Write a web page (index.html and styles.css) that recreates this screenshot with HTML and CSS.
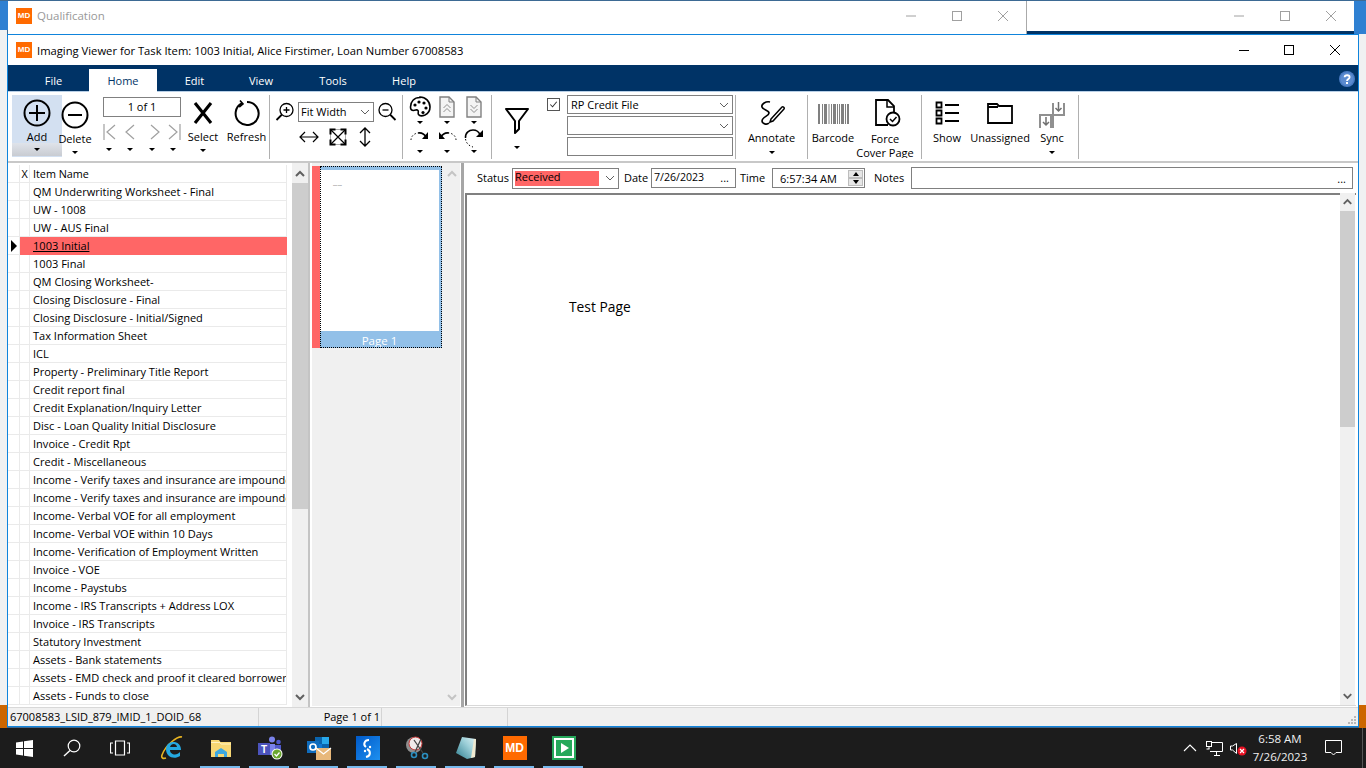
FILE: index.html
```html
<!DOCTYPE html>
<html lang="en">
<head>
<meta charset="utf-8">
<title>Imaging Viewer</title>
<link rel="stylesheet" href="styles.css">
</head>
<body>
<div class="screen">
  <div class="desktop">
    <div class="back-strip left-blue"></div>
    <div class="back-strip left-light"></div>
    <div class="back-strip left-orange"></div>
    <div class="back-strip right-blue"></div>
    <div class="back-strip right-light"></div>
    <div class="back-strip right-orange"></div>

    <div class="back-win win-qual">
      <span class="md-logo">MD</span><span class="back-title">Qualification</span>
      <div class="controls dim">
        <svg class="ctl" width="46" height="12" viewBox="0 0 46 12"><path d="M18 6h10"/></svg>
        <svg class="ctl" width="46" height="12" viewBox="0 0 46 12"><rect x="18.5" y="1.5" width="9" height="9"/></svg>
        <svg class="ctl" width="46" height="12" viewBox="0 0 46 12"><path d="M18 1l10 10M28 1L18 11"/></svg>
      </div>
    </div>
    <div class="back-win win-other">
      <div class="controls dim">
        <svg class="ctl" width="46" height="12" viewBox="0 0 46 12"><path d="M18 6h10"/></svg>
        <svg class="ctl" width="46" height="12" viewBox="0 0 46 12"><rect x="18.5" y="1.5" width="9" height="9"/></svg>
        <svg class="ctl" width="46" height="12" viewBox="0 0 46 12"><path d="M18 1l10 10M28 1L18 11"/></svg>
      </div>
    </div>

    <div class="main-win">
      <div class="titlebar">
        <span class="md-logo">MD</span>
        <span class="main-title">Imaging Viewer for Task Item: 1003 Initial, Alice Firstimer, Loan Number 67008583</span>
        <div class="controls">
          <svg class="ctl dark" width="46" height="12" viewBox="0 0 46 12"><path d="M19 6.5h10"/></svg>
          <svg class="ctl dark" width="46" height="12" viewBox="0 0 46 12"><rect x="18.5" y="1.5" width="9" height="9"/></svg>
          <svg class="ctl dark" width="46" height="12" viewBox="0 0 46 12"><path d="M18 1l10 10M28 1L18 11"/></svg>
        </div>
      </div>

      <div class="menubar">
        <span class="tab">File</span>
        <span class="tab active">Home</span>
        <span class="tab">Edit</span>
        <span class="tab">View</span>
        <span class="tab">Tools</span>
        <span class="tab">Help</span>
        <svg class="help" width="16" height="16" viewBox="0 0 16 16"><circle cx="8" cy="8" r="8" fill="#4a7cc4"/><circle cx="8" cy="8" r="6.5" fill="#5b8bd0"/><path d="M5.6 6.2C5.8 3.6 10.6 3.6 10.6 6.2 10.6 8 8 8 8 10" fill="none" stroke="#fff" stroke-width="1.8"/><rect x="7" y="11" width="2" height="2" fill="#fff"/></svg>
      </div>

      <div class="ribbon">
        <div class="group g-main">
          <div class="tool add">
            <svg width="28" height="28" viewBox="0 0 28 28"><circle cx="14" cy="14" r="12.5" fill="none" stroke="#000" stroke-width="2"/><path d="M14 6v16M6 14h16" stroke="#000" stroke-width="2"/></svg>
            <span class="label">Add</span>
            <span class="drop"><i class="caret"></i></span>
          </div>
          <div class="tool del low">
            <svg width="28" height="28" viewBox="0 0 28 28"><circle cx="14" cy="14" r="12.5" fill="none" stroke="#000" stroke-width="2"/><path d="M7 14h14" stroke="#000" stroke-width="2"/></svg>
            <span class="label">Delete</span>
            <span class="drop"><i class="caret"></i></span>
          </div>
          <div class="pager">
            <div class="page-box">1 of 1</div>
            <div class="nav-row">
              <svg width="14" height="16" viewBox="0 0 14 16"><path d="M1 0v16M12 1L4 8l8 7" fill="none" stroke="#a0a0a0" stroke-width="1.2"/></svg>
              <svg width="10" height="16" viewBox="0 0 10 16"><path d="M9 1L1 8l8 7" fill="none" stroke="#a0a0a0" stroke-width="1.2"/></svg>
              <svg width="10" height="16" viewBox="0 0 10 16"><path d="M1 1l8 7-8 7" fill="none" stroke="#a0a0a0" stroke-width="1.2"/></svg>
              <svg width="14" height="16" viewBox="0 0 14 16"><path d="M13 0v16M2 1l8 7-8 7" fill="none" stroke="#a0a0a0" stroke-width="1.2"/></svg>
            </div>
            <div class="nav-carets"><i class="caret"></i><i class="caret"></i><i class="caret"></i><i class="caret"></i></div>
          </div>
          <div class="tool sel">
            <svg width="28" height="28" viewBox="0 0 28 28"><path d="M6 4l16 20M22 4L6 24" stroke="#000" stroke-width="3.1"/></svg>
            <span class="label">Select</span>
            <span class="drop"><i class="caret"></i></span>
          </div>
          <div class="tool ref">
            <svg width="28" height="28" viewBox="0 0 28 28"><path d="M9 4.2A11.5 11.5 0 1 0 14 3" fill="none" stroke="#000" stroke-width="2"/><path d="M7 1.5L10 5 6.2 8" fill="none" stroke="#000" stroke-width="1.6"/></svg>
            <span class="label">Refresh</span>
          </div>
        </div>

        <div class="group g-zoom">
          <div class="zoom-row">
            <svg width="20" height="20" viewBox="0 0 20 20"><circle cx="11.500" cy="8" r="6.500" fill="none" stroke="#000" stroke-width="1.300"/><path d="M8.500 8h6M11.500 5v6" stroke="#000" stroke-width="1.300"/><path d="M7 12.500L1.500 18" stroke="#000" stroke-width="1.800"/></svg>
            <div class="combo zoom-combo"><span>Fit Width</span><svg class="chev" width="10" height="6" viewBox="0 0 10 6"><path d="M1 1l4 4 4-4" fill="none" stroke="#606060"/></svg></div>
            <svg width="20" height="20" viewBox="0 0 20 20"><circle cx="8.500" cy="8" r="6.500" fill="none" stroke="#000" stroke-width="1.300"/><path d="M5.500 8h6" stroke="#000" stroke-width="1.300"/><path d="M13 12.500L18.500 18" stroke="#000" stroke-width="1.800"/></svg>
          </div>
          <div class="fit-row">
            <svg width="22" height="20" viewBox="0 0 22 20"><path d="M2 10h18M7 5l-5 5 5 5M15 5l5 5-5 5" fill="none" stroke="#000" stroke-width="1.200"/></svg>
            <svg width="22" height="20" viewBox="0 0 22 20"><path d="M4 3l14 14M18 3L4 17" stroke="#000" stroke-width="1.200"/><path d="M8 2.500h6M8 17.500h6M3.500 7v6M18.500 7v6" stroke="#aaa" stroke-width="1"/><path d="M2.500 1.500h6v2h-4v4h-2zM19.500 1.500h-6v2h4v4h2zM2.500 18.500h6v-2h-4v-4h-2zM19.500 18.500h-6v-2h4v-4h2z"/></svg>
            <svg width="14" height="20" viewBox="0 0 14 20"><path d="M7 1v18M2 6l5-5 5 5M2 14l5 5 5-5" fill="none" stroke="#000" stroke-width="1.300"/></svg>
          </div>
        </div>

        <div class="group g-doc">
          <div class="cell">
            <svg width="22" height="22" viewBox="0 0 22 22"><path d="M11 1.500C5 1.500 1.500 5.500 1.500 11c0 2 1 3.500 3 3.500 2.500 0 3-1.500 4.500 0 1 1-.5 2.500.5 4 1 1.500 4 1.500 6.500.5 3.500-1.500 5-4.500 5-8 0-5.500-4.500-10-10-10z" fill="#fff" stroke="#000" stroke-width="1.600"/><circle cx="6" cy="9" r="1.600"/><circle cx="10" cy="6" r="1.600"/><circle cx="15" cy="7" r="1.600"/><circle cx="17" cy="12" r="1.600"/><circle cx="14" cy="16.500" r="1.600"/></svg>
            <i class="caret"></i>
          </div>
          <div class="cell">
            <svg width="16" height="22" viewBox="0 0 16 22"><path d="M1 1h9l5 5v15H1z" fill="#f4f4f4" stroke="#808080" stroke-width="1.400"/><path d="M10 1v5h5" fill="none" stroke="#808080"/><path d="M4.500 12L8 8.500l3.500 3.500M4.500 16L8 12.500l3.500 3.500" fill="none" stroke="#909090"/></svg>
            <i class="caret"></i>
          </div>
          <div class="cell">
            <svg width="16" height="22" viewBox="0 0 16 22"><path d="M1 1h9l5 5v15H1z" fill="#f4f4f4" stroke="#808080" stroke-width="1.400"/><path d="M10 1v5h5" fill="none" stroke="#808080"/><path d="M4.500 9L8 12.500 11.500 9M4.500 13L8 16.500 11.500 13" fill="none" stroke="#909090"/></svg>
            <i class="caret"></i>
          </div>
          <div class="cell">
            <svg width="20" height="20" viewBox="0 0 20 20"><path d="M1 12A8 7 0 0 1 8 5" fill="none" stroke="#000" stroke-dasharray="1.500 2"/><path d="M8 5C11 4.500 14 5.500 16 9" fill="none" stroke="#000" stroke-width="1.600"/><path d="M18 4v7h-6z"/></svg>
            <i class="caret"></i>
          </div>
          <div class="cell">
            <svg width="20" height="20" viewBox="0 0 20 20"><path d="M19 12A8 7 0 0 0 12 5" fill="none" stroke="#000" stroke-dasharray="1.500 2"/><path d="M12 5C9 4.500 6 5.500 4 9" fill="none" stroke="#000" stroke-width="1.600"/><path d="M2 4v7h6z"/></svg>
            <i class="caret"></i>
          </div>
          <div class="cell">
            <svg width="22" height="22" viewBox="0 0 22 22"><path d="M2.500 11C2 6 6 3 10 3c3 0 6 2 7 5" fill="none" stroke="#000" stroke-width="1.500"/><path d="M2.500 12C3 16 6 19 10 20" fill="none" stroke="#000" stroke-dasharray="1.500 2"/><path d="M20 3v7h-7z"/></svg>
            <i class="caret"></i>
          </div>
        </div>

        <div class="group g-filter">
          <div class="tool funnel">
            <svg width="26" height="28" viewBox="0 0 26 28"><path d="M2 2h22L15 14v8l-4 4V14z" fill="#fff" stroke="#000" stroke-width="2" stroke-linejoin="round"/></svg>
            <span class="drop"><i class="caret"></i></span>
          </div>
          <div class="check"><svg width="11" height="11" viewBox="0 0 12 12"><path d="M2.500 6l2.500 2.500 4.500-5.500" fill="none" stroke="#333" stroke-width="1.100"/></svg></div>
          <div class="filters">
            <div class="combo"><span>RP Credit File</span><svg class="chev" width="10" height="6" viewBox="0 0 10 6"><path d="M1 1l4 4 4-4" fill="none" stroke="#606060"/></svg></div>
            <div class="combo"><span></span><svg class="chev" width="10" height="6" viewBox="0 0 10 6"><path d="M1 1l4 4 4-4" fill="none" stroke="#606060"/></svg></div>
            <div class="combo"></div>
          </div>
        </div>

        <div class="group g-annot">
          <div class="tool wide">
            <svg width="28" height="28" viewBox="0 0 28 28"><path d="M12 3C8 2 3 5 4 8c1 3 7 3 7 6 0 3-7 4-7 8 0 3 5 4 7 2" fill="none" stroke="#000" stroke-width="1.700"/><path d="M13 20L24 8c1-1 3 1 2 2L15 22l-3 1z" fill="#fff" stroke="#000" stroke-width="1.500"/></svg>
            <span class="label">Annotate</span>
            <span class="drop"><i class="caret"></i></span>
          </div>
        </div>

        <div class="group g-code">
          <div class="tool barcode">
            <svg width="32" height="20" viewBox="0 0 32 20"><path d="M1 0h2v20H1zM5 0h1v20H5zM7 0h3v20H7zM11.500 0h1v20h-1zM14 0h1v20h-1zM16 0h3v20h-3zM20 0h1v20h-1zM22 0h1v20h-1zM24 0h3v20h-3zM28 0h1v20h-1zM30 0h2v20h-2z" fill="#808080"/></svg>
            <span class="label">Barcode</span>
          </div>
          <div class="tool force">
            <svg width="28" height="28" viewBox="0 0 28 28"><path d="M15 26H3V1h12l6 6v8" fill="#fff" stroke="#000" stroke-width="1.800"/><path d="M14 1v7h7" fill="none" stroke="#000" stroke-width="1.500"/><circle cx="20" cy="20" r="6.500" fill="#fff" stroke="#000" stroke-width="1.800"/><path d="M17 20l2.500 2.500 4-4.500" fill="none" stroke="#000" stroke-width="1.500"/></svg>
            <span class="label two">Force<br>Cover Page</span>
          </div>
        </div>

        <div class="group g-show">
          <div class="tool show">
            <svg width="24" height="24" viewBox="0 0 24 24"><path d="M1.500 1.500h5v5h-5zM1.500 9.500h5v5h-5zM1.500 17.500h5v5h-5z" fill="none" stroke="#000" stroke-width="1.800"/><path d="M10 4h14M10 12h14M10 20h14" stroke="#000" stroke-width="1.800"/></svg>
            <span class="label">Show</span>
          </div>
          <div class="tool unas">
            <svg width="26" height="24" viewBox="0 0 26 24"><path d="M1 3h9l2 2h13v17H1zM1 6h10" fill="none" stroke="#000" stroke-width="1.800"/></svg>
            <span class="label">Unassigned</span>
          </div>
          <div class="tool sync">
            <svg width="26" height="26" viewBox="0 0 26 26"><path d="M14 1v12h11V1M1 26V13h13v13M12 26v-13" fill="none" stroke="#909090" stroke-width="2"/><path d="M19.500 0v9M16.500 6l3 3 3-3M7 15v8M4 20l3 3 3-3" fill="none" stroke="#707070" stroke-width="1.500"/></svg>
            <span class="label">Sync</span>
            <span class="drop"><i class="caret"></i></span>
          </div>
        </div>
      </div>

      <div class="content">
        <div class="grid">
          <div class="row head"><span class="rh"></span><span class="cx">X</span><span class="name">Item Name</span></div>
          <div class="row"><span class="rh"></span><span class="cx"></span><span class="name">QM Underwriting Worksheet - Final</span></div>
          <div class="row"><span class="rh"></span><span class="cx"></span><span class="name">UW - 1008</span></div>
          <div class="row"><span class="rh"></span><span class="cx"></span><span class="name">UW - AUS Final</span></div>
          <div class="row current"><span class="rh"><i class="pointer"></i></span><span class="cx"></span><span class="name">1003 Initial</span></div>
          <div class="row"><span class="rh"></span><span class="cx"></span><span class="name">1003 Final</span></div>
          <div class="row"><span class="rh"></span><span class="cx"></span><span class="name">QM Closing Worksheet-</span></div>
          <div class="row"><span class="rh"></span><span class="cx"></span><span class="name">Closing Disclosure - Final</span></div>
          <div class="row"><span class="rh"></span><span class="cx"></span><span class="name">Closing Disclosure - Initial/Signed</span></div>
          <div class="row"><span class="rh"></span><span class="cx"></span><span class="name">Tax Information Sheet</span></div>
          <div class="row"><span class="rh"></span><span class="cx"></span><span class="name">ICL</span></div>
          <div class="row"><span class="rh"></span><span class="cx"></span><span class="name">Property - Preliminary Title Report</span></div>
          <div class="row"><span class="rh"></span><span class="cx"></span><span class="name">Credit report final</span></div>
          <div class="row"><span class="rh"></span><span class="cx"></span><span class="name">Credit Explanation/Inquiry Letter</span></div>
          <div class="row"><span class="rh"></span><span class="cx"></span><span class="name">Disc - Loan Quality Initial Disclosure</span></div>
          <div class="row"><span class="rh"></span><span class="cx"></span><span class="name">Invoice - Credit Rpt</span></div>
          <div class="row"><span class="rh"></span><span class="cx"></span><span class="name">Credit - Miscellaneous</span></div>
          <div class="row"><span class="rh"></span><span class="cx"></span><span class="name">Income - Verify taxes and insurance are impounded</span></div>
          <div class="row"><span class="rh"></span><span class="cx"></span><span class="name">Income - Verify taxes and insurance are impounded</span></div>
          <div class="row"><span class="rh"></span><span class="cx"></span><span class="name">Income- Verbal VOE for all employment</span></div>
          <div class="row"><span class="rh"></span><span class="cx"></span><span class="name">Income- Verbal VOE within 10 Days</span></div>
          <div class="row"><span class="rh"></span><span class="cx"></span><span class="name">Income- Verification of Employment Written</span></div>
          <div class="row"><span class="rh"></span><span class="cx"></span><span class="name">Invoice - VOE</span></div>
          <div class="row"><span class="rh"></span><span class="cx"></span><span class="name">Income - Paystubs</span></div>
          <div class="row"><span class="rh"></span><span class="cx"></span><span class="name">Income - IRS Transcripts + Address LOX</span></div>
          <div class="row"><span class="rh"></span><span class="cx"></span><span class="name">Invoice - IRS Transcripts</span></div>
          <div class="row"><span class="rh"></span><span class="cx"></span><span class="name">Statutory Investment</span></div>
          <div class="row"><span class="rh"></span><span class="cx"></span><span class="name">Assets - Bank statements</span></div>
          <div class="row"><span class="rh"></span><span class="cx"></span><span class="name">Assets - EMD check and proof it cleared borrower</span></div>
          <div class="row"><span class="rh"></span><span class="cx"></span><span class="name">Assets - Funds to close</span></div>
        </div>

        <div class="vscroll grid-scroll">
          <svg class="sb-arrow" width="16" height="18" viewBox="0 0 16 18"><path d="M4 11l4-4 4 4" fill="none" stroke="#606060" stroke-width="2"/></svg>
          <div class="thumb t-grid"></div>
          <div class="sb-fill"></div>
          <svg class="sb-arrow" width="16" height="18" viewBox="0 0 16 18"><path d="M4 7l4 4 4-4" fill="none" stroke="#606060" stroke-width="2"/></svg>
        </div>
        <div class="split-a"></div>

        <div class="thumbs">
          <div class="thumb-card">
            <div class="thumb-flag"></div>
            <div class="thumb-sel">
              <div class="thumb-page"><span class="tiny">Test Page</span></div>
              <div class="thumb-cap">Page 1</div>
            </div>
          </div>
        </div>
        <div class="vscroll thumb-scroll">
          <svg class="sb-arrow" width="16" height="18" viewBox="0 0 16 18"><path d="M4 11l4-4 4 4" fill="none" stroke="#c4c4c4" stroke-width="2"/></svg>
          <div class="sb-fill"></div>
          <svg class="sb-arrow" width="16" height="18" viewBox="0 0 16 18"><path d="M4 7l4 4 4-4" fill="none" stroke="#c4c4c4" stroke-width="2"/></svg>
        </div>
        <div class="split-b"></div>

        <div class="doc-pane">
          <div class="meta">
            <span class="m-label m-status">Status</span>
            <div class="combo status"><span class="received">Received</span><svg class="chev" width="10" height="6" viewBox="0 0 10 6"><path d="M1 1l4 4 4-4" fill="none" stroke="#606060"/></svg></div>
            <span class="m-label m-date">Date</span>
            <div class="combo date"><span>7/26/2023</span><b>...</b></div>
            <span class="m-label m-time">Time</span>
            <div class="combo time"><span>6:57:34 AM</span>
              <div class="spin"><i class="up"></i><i class="down"></i></div>
            </div>
            <span class="m-label m-notes">Notes</span>
            <div class="combo notes"><b>...</b></div>
          </div>
          <div class="viewer">
            <div class="page-area"><p class="test-page">Test Page</p></div>
            <div class="vscroll view-scroll">
              <svg class="sb-arrow" width="15" height="18" viewBox="0 0 16 18"><path d="M4 11l4-4 4 4" fill="none" stroke="#606060" stroke-width="2"/></svg>
              <div class="thumb t-view"></div>
              <div class="sb-fill"></div>
              <svg class="sb-arrow" width="15" height="18" viewBox="0 0 16 18"><path d="M4 7l4 4 4-4" fill="none" stroke="#606060" stroke-width="2"/></svg>
            </div>
          </div>
        </div>
      </div>

      <div class="statusbar">
        <span class="st-a">67008583_LSID_879_IMID_1_DOID_68</span>
        <span class="st-b">Page 1 of 1</span>
        <span class="st-c"></span>
        <svg class="grip" width="9" height="9" viewBox="0 0 9 9"><path d="M7 0h2v2H7zM4 3h2v2H4zM7 3h2v2H7zM1 6h2v2H1zM4 6h2v2H4zM7 6h2v2H7z" fill="#b8b8b8"/></svg>
      </div>
    </div>
  </div>

  <div class="taskbar">
    <div class="tb-btn first">
      <svg width="17" height="17" viewBox="0 0 17 17"><path d="M0 2.400L7 1.400v6.600H0zM8 1.300L17 0v8H8zM0 9h7v6.600L0 14.600zM8 9h9v8l-9-1.300z" fill="#fff"/></svg>
    </div>
    <div class="tb-btn">
      <svg width="18" height="18" viewBox="0 0 18 18"><circle cx="11" cy="7" r="5.800" fill="none" stroke="#fff" stroke-width="1.200"/><path d="M7 11.500L1 17" stroke="#fff" stroke-width="1.400"/></svg>
    </div>
    <div class="tb-btn">
      <svg width="20" height="16" viewBox="0 0 20 16"><path d="M5.500 1h9v14h-9zM3 3H.5v10H3M17 3h2.500v10H17" fill="none" stroke="#fff" stroke-width="1.200"/></svg>
    </div>
    <div class="tb-btn app">
      <svg width="24" height="24" viewBox="0 0 24 24"><path d="M22 1C18 0 6 8 2 19c-1 3 1 4 4 3" fill="none" stroke="#e8b422" stroke-width="1.600"/><path d="M6 13c0-9 15-10 15 1H10c0 5 7 6 10 2l0 4c-6 4-14 1-14-7zM10 11h7c-.5-4-6-4-7 0z" fill="#25a9e0"/></svg>
    </div>
    <div class="tb-btn app ul">
      <svg width="22" height="20" viewBox="0 0 22 20"><path d="M1 2h8l1.500 2H21v15H1z" fill="#f7d774"/><path d="M1 4.500h9L11 6h10" fill="none" stroke="#fff3c4"/><path d="M5 14l6-4 6 4v5h-3v-3H8v3H5z" fill="#3ea9e0"/></svg>
    </div>
    <div class="tb-btn app ul">
      <svg width="26" height="24" viewBox="0 0 26 24"><circle cx="15" cy="3.500" r="3" fill="#7b83eb"/><circle cx="21.500" cy="6" r="2.300" fill="#5059c9"/><path d="M10 8h8v11h-8z" fill="#7b83eb"/><path d="M18 9h6v6a3 3 0 0 1-6 0z" fill="#5059c9"/><path d="M1 7h12v12H1z" fill="#4b53bc"/><text x="7" y="16.500" class="teams-t">T</text><circle cx="20" cy="18" r="5.500" fill="#fff"/><circle cx="20" cy="18" r="4.500" fill="#6aa62f"/><path d="M17.500 18l2 2 3-3.500" fill="none" stroke="#fff" stroke-width="1.300"/></svg>
    </div>
    <div class="tb-btn app ul">
      <svg width="26" height="26" viewBox="0 0 26 26"><path d="M9 2h14v14H9z" fill="#0a64ad"/><path d="M16 2h7v7h-7z" fill="#28a8ea"/><path d="M9 9h7v7H9z" fill="#0f78d4"/><path d="M1 6h12v12H1z" fill="#0f6cbd"/><circle cx="7" cy="12" r="3" fill="none" stroke="#fff" stroke-width="1.700"/><path d="M10 13h15v12H10z" fill="#e8b87a"/><path d="M10 13l7.500 6 7.500-6" fill="none" stroke="#fff" stroke-width="1.300"/></svg>
    </div>
    <div class="tb-btn app ul">
      <svg width="24" height="24" viewBox="0 0 24 24"><defs><linearGradient id="sg" x1="0" y1="0" x2="1" y2="1"><stop offset="0" stop-color="#0059c8"/><stop offset="1" stop-color="#1e90f0"/></linearGradient></defs><rect width="24" height="24" fill="url(#sg)"/><path d="M13 4C8 4 7 9 10 11M11 13c4 2 4 7-1 8" fill="none" stroke="#fff" stroke-width="2"/><circle cx="14" cy="11" r="1.200" fill="#fff"/><circle cx="9" cy="15" r="1.200" fill="#fff"/></svg>
    </div>
    <div class="tb-btn app ul">
      <svg width="24" height="24" viewBox="0 0 24 24"><circle cx="9" cy="9" r="8" fill="#8e8e8e"/><circle cx="10.500" cy="7.500" r="6.500" fill="#efe9e9" stroke="#c63a3a"/><path d="M9 4l9 13M16 3l-6 13" stroke="#444" stroke-width="1.300"/><circle cx="9" cy="19" r="2.500" fill="none" stroke="#2b8fc0" stroke-width="1.600"/><circle cx="20" cy="20" r="2.500" fill="none" stroke="#2b8fc0" stroke-width="1.600"/></svg>
    </div>
    <div class="tb-btn app ul">
      <svg width="24" height="24" viewBox="0 0 24 24"><defs><linearGradient id="ng" x1="0" y1="1" x2="1" y2="0"><stop offset="0" stop-color="#2f7f90"/><stop offset=".6" stop-color="#9ccfd8"/><stop offset="1" stop-color="#dff2f5"/></linearGradient></defs><path d="M8 1l14 2-1 18-8 2-11-6z" fill="url(#ng)"/><path d="M20 3l2 0-1 18-4 1z" fill="#efe9d0"/></svg>
    </div>
    <div class="tb-btn app ul"><span class="md-big">MD</span></div>
    <div class="tb-btn app ul">
      <svg width="24" height="24" viewBox="0 0 24 24"><rect width="24" height="24" fill="#25a85a"/><rect x="3" y="3" width="18" height="18" fill="#25a85a" stroke="#fff" stroke-width="2"/><path d="M9 7l8 5-8 5z" fill="#fff"/></svg>
    </div>

    <div class="tray">
      <svg class="tray-chev" width="14" height="8" viewBox="0 0 14 8"><path d="M1 7l6-6 6 6" fill="none" stroke="#fff" stroke-width="1.100"/></svg>
      <svg class="tray-net" width="17" height="15" viewBox="0 0 17 15"><path d="M4 1.500h12.500v9H4M8 14.500h6M10.500 10.500v4" fill="none" stroke="#fff"/><rect x=".5" y=".5" width="5" height="5" fill="#1c1c1c" stroke="#fff"/><path d="M.5 8h3M3 5.500V8" stroke="#fff"/></svg>
      <svg class="tray-vol" width="17" height="15" viewBox="0 0 17 15"><path d="M.5 5v4h2L6.500 12.500v-10L2.500 5z" fill="none" stroke="#fff"/><circle cx="12" cy="10" r="4.500" fill="#e81123"/><path d="M10 8l4 4M14 8l-4 4" stroke="#fff" stroke-width="1.200"/></svg>
      <div class="clock"><span>6:58 AM</span><span>7/26/2023</span></div>
      <svg class="tray-note" width="17" height="16" viewBox="0 0 17 16"><path d="M.5 .5h16v12H11l-2.500 2.500L6 12.500H.5z" fill="none" stroke="#fff"/></svg>
      <span class="show-desk"></span>
    </div>
  </div>
</div>
</body>
</html>
```

FILE: styles.css
```css
* { box-sizing: border-box; }
html, body { margin: 0; height: 100%; }
body { font-family: "Open Sans", "Noto Sans", sans-serif; font-size: 11px; color: #000; overflow: hidden; }
i, b { font-style: normal; font-weight: normal; }
p { margin: 0; }

.screen { width: 1366px; height: 768px; display: flex; flex-direction: column; }
.desktop { position: relative; height: 728px; background: #3d6a94; overflow: hidden; }

.back-strip { position: absolute; }
.left-blue { left: 0; top: 1px; width: 8px; height: 29px; background: #2f80d2; }
.left-light { left: 0; top: 30px; width: 7px; height: 675px; background: #f0f1f2; }
.left-orange { left: 0; top: 705px; width: 7px; height: 23px; background: #cc6600; }
.right-blue { left: 1354px; top: 1px; width: 12px; height: 33px; background: #2f80d2; }
.right-light { left: 1359px; top: 34px; width: 7px; height: 671px; background: #f0f1f2; }
.right-orange { left: 1359px; top: 705px; width: 7px; height: 23px; background: #cc6600; }

.back-win { position: absolute; top: 1px; height: 33px; background: #fff; display: flex; align-items: center; }
.win-qual { left: 8px; width: 1019px; padding: 0 0 4px 8px; border-right: 1px solid #aaa; }
.win-other { left: 1027px; width: 327px; border-bottom: 3px solid #003366; padding-bottom: 1px; }
.back-title { margin-left: 5px; color: #999; font-size: 11.5px; }

.md-logo { width: 16px; height: 16px; background: #ff6a00; color: #fff; font: bold 8px/16px "Liberation Sans", sans-serif; text-align: center; flex: none; }

.controls { margin-left: auto; display: flex; }
.ctl { display: block; }
.ctl path, .ctl rect { fill: none; stroke: #a0a0a0; stroke-width: 1; }
.ctl.dark path, .ctl.dark rect { stroke: #000; }

.main-win { position: absolute; left: 7px; top: 34px; width: 1352px; height: 693px; border: 1px solid #0f84dc; display: flex; flex-direction: column; background: #fff; }

.titlebar { height: 30px; display: flex; align-items: center; padding-left: 8px; background: #fff; }
.main-title { margin-left: 5px; font-size: 11.22px; }

.menubar { height: 27px; background: #003366; border-bottom: 1px solid #b8cfe6; display: flex; align-items: flex-end; padding-left: 21px; color: #fff; position: relative; }
.tab { width: 49px; height: 22px; text-align: center; line-height: 24px; font-size: 11px; }
.tab:nth-child(2) { width: 68px; margin-left: 11px; }
.tab:nth-child(3) { margin-left: 13px; width: 49px; }
.tab:nth-child(4) { margin-left: 19px; width: 46px; }
.tab:nth-child(5) { margin-left: 24px; width: 50px; }
.tab:nth-child(6) { margin-left: 21px; width: 50px; }
.tab.active { background: #fff; color: #003366; height: 23px; margin-bottom: -1px; }
.help { position: absolute; right: 3px; top: 6px; }

.ribbon { height: 71px; display: flex; border-bottom: 2px solid #c8c8c8; background: #fff; overflow: hidden; }
.group { height: 64px; margin-top: 3px; border-right: 1px solid #b0b0b0; flex: none; display: flex; }
.g-main { width: 262px; padding-left: 4px; }
.g-zoom { width: 133px; flex-direction: column; padding-left: 5px; }
.g-doc { width: 89px; padding-left: 3px; display: grid; grid-template-columns: repeat(3, 27px); grid-template-rows: 32px 31px; }
.g-filter { width: 244px; }
.g-annot { width: 72px; }
.g-code { width: 114px; }
.g-show { width: 157px; }

.tool { display: flex; flex-direction: column; align-items: center; padding-top: 4px; flex: none; }
.tool svg { display: block; flex: none; }
.label { margin-top: 3px; line-height: 14px; white-space: nowrap; height: 14px; }
.drop { height: 13px; width: 100%; display: flex; align-items: center; justify-content: center; }
.caret { display: block; width: 0; height: 0; border-left: 3.500px solid transparent; border-right: 3.500px solid transparent; border-top: 3.500px solid #000; }

.add { width: 50px; height: 62px; background: #d3e0f1; }
.add .drop { background: linear-gradient(#dfe3ea, #c9ccd2); margin-top: -1px; }
.del { width: 26px; }
.low { padding-top: 6px; }
.pager { width: 78px; margin-left: 15px; margin-top: 2px; flex: none; display: flex; flex-direction: column; }
.page-box { height: 20px; border: 1px solid #808080; text-align: center; line-height: 18px; }
.nav-row { display: flex; margin-top: 7px; }
.nav-row svg { display: block; flex: none; }
.nav-row svg:nth-child(2) { margin-left: 8px; }
.nav-row svg:nth-child(3) { margin-left: 15px; margin-right: 7px; }
.nav-carets { display: flex; margin-top: 8px; padding-left: 3px; gap: 15.4px; }
.sel { width: 36px; margin-left: 4px; }
.ref { width: 43px; margin-left: 4px; }

.combo { border: 1px solid #808080; display: flex; align-items: center; background: #fff; padding-left: 3px; position: relative; white-space: nowrap; }
.chev { margin-left: auto; margin-right: 3px; flex: none; }

.zoom-row { display: flex; margin-top: 7px; gap: 3px; align-items: center; }
.zoom-row svg { flex: none; }
.zoom-combo { width: 76px; height: 20px; padding-left: 2px; }
.zoom-combo span { padding-bottom: 2px; }
.fit-row { display: flex; margin-top: 5px; padding-left: 23px; gap: 7px; }
.fit-row svg:last-child { margin-left: 2px; }

.cell { display: flex; flex-direction: column; align-items: center; justify-content: flex-start; gap: 3px; padding-top: 1px; }
.cell svg { display: block; flex: none; }
.cell:nth-child(n+4) { padding-top: 0; gap: 1px; }
.cell:nth-child(n+4) svg { height: 22px; }

.funnel { width: 50px; padding-top: 12px; }
.funnel .drop { margin-top: 6px; }
.check { width: 13px; height: 13px; border: 1px solid #555; margin: 3px 0 0 5px; flex: none; }
.check svg { display: block; }
.filters { width: 166px; margin-left: 7px; flex: none; display: flex; flex-direction: column; gap: 2px; }
.filters .combo { height: 19px; }

.wide { width: 71px; }
.wide .label { margin-top: 4px; }
.wide .drop { margin-top: 1px; }
.barcode { width: 50px; padding-top: 9px; }
.barcode .label { margin-top: 7px; }
.force { width: 54px; }
.force svg { margin-left: 4px; }
.force .label.two { height: 26px; margin-top: 5px; line-height: 14px; text-align: center; overflow: hidden; }
.show { width: 50px; padding-top: 6px; }
.show .label { margin-top: 6px; }
.unas { width: 56px; padding-top: 6px; }
.unas .label { margin-top: 6px; }
.sync { width: 48px; padding-top: 7px; }
.sync .label { margin-top: 3px; }
.sync .drop { margin-top: 1px; }

.content { height: 544px; display: flex; overflow: hidden; background: #fff; }

.grid { width: 279px; padding-top: 2px; flex: none; margin-right: 5px; font-size: 11.05px; }
.row { display: flex; height: 18px; line-height: 17px; }
.head { font-size: 10.8px; }
.rh { width: 12px; border-right: 1px solid #eaeaea; border-bottom: 1px solid #eaeaea; display: flex; align-items: center; padding-left: 3px; flex: none; }
.cx { width: 10px; border-right: 1px solid #eaeaea; border-bottom: 1px solid #eaeaea; flex: none; text-align: center; }
.name { flex: 1; padding-left: 3px; border-bottom: 1px solid #eaeaea; border-right: 1px solid #eaeaea; white-space: nowrap; overflow: hidden; min-width: 0; }
.current .cx, .current .name { background: #ff6666; border-color: #ff6666; }
.current .name { text-decoration: underline; }
.pointer { display: block; width: 0; height: 0; border-top: 6px solid transparent; border-bottom: 6px solid transparent; border-left: 6px solid #000; }

.vscroll { width: 16px; flex: none; display: flex; flex-direction: column; background: #f0f0f0; padding-top: 2px; }
.sb-arrow { display: block; flex: none; }
.thumb { background: #cdcdcd; flex: none; }
.t-grid { height: 326px; }
.t-view { height: 216px; }
.sb-fill { flex: 1; }
.split-a { width: 4px; flex: none; border-left: 2px solid #c4c4c4; }
.grid-scroll { padding-bottom: 1px; }

.thumbs { width: 132px; flex: none; background: #f0f0f0; padding-top: 3px; margin-bottom: 1px; }
.thumb-card { display: flex; height: 182px; }
.thumb-flag { width: 8px; background: #ff6666; flex: none; }
.thumb-sel { width: 122px; flex: none; background: #92c0e8; padding-top: 4px; outline: 1px dotted #000; outline-offset: -1px; display: flex; flex-direction: column; }
.thumb-page { height: 161px; width: 119px; background: #fff; padding: 13px 0 0 13px; line-height: 6px; }
.tiny { font-size: 2px; color: #555; display: block; }
.thumb-cap { height: 16px; color: #fff; text-align: center; line-height: 20px; font-size: 11.5px; padding-right: 3px; overflow: hidden; }
.thumb-scroll { margin-bottom: 1px; }
.split-b { width: 3px; flex: none; background: #a6a6a6; margin-left: 1px; }

.doc-pane { flex: 1; min-width: 0; display: flex; flex-direction: column; }
.meta { height: 30px; display: flex; align-items: center; position: relative; padding-left: 13px; }
.m-label { padding-bottom: 1px; }
.m-status { width: 35px; }
.status { width: 107px; height: 21px; padding-left: 2px; }
.received { background: #ff6666; width: 84px; height: 15px; line-height: 12px; display: block; }
.m-date { margin-left: 5px; width: 27px; }
.date { width: 85px; height: 20px; padding-left: 2px; }
.date span, .date b { line-height: 16px; }
.date span { padding-bottom: 2px; font-size: 10.6px; }
.date b { position: absolute; right: 6px; top: 1px; }
.m-time { margin-left: 4px; width: 32px; }
.time { width: 93px; height: 20px; padding-left: 7px; }
.spin { position: absolute; right: 1px; top: 1px; width: 15px; height: 16px; display: flex; flex-direction: column; }
.spin i { flex: 1; display: flex; align-items: center; justify-content: center; background: #e6e6e6; border: 1px solid #bdbdbd; }
.spin i::after { content: ""; border-left: 3px solid transparent; border-right: 3px solid transparent; }
.spin .up::after { border-bottom: 4px solid #000; }
.spin .down::after { border-top: 4px solid #000; }
.m-notes { margin-left: 9px; width: 37px; }
.notes { width: 442px; height: 22px; }
.notes b { position: absolute; right: 6px; top: 3px; }

.viewer { flex: 1; display: flex; width: 891px; margin-left: 1px; border-top: 2px solid #808080; border-left: 2px solid #808080; border-bottom: 1px solid #d8d8d8; margin-bottom: 1px; min-height: 0; }
.page-area { flex: 1; background: #fff; padding: 102px 0 0 102px; }
.test-page { font-size: 13.8px; line-height: 20px; }
.view-scroll { width: 15px; margin-right: 1px; margin-top: -2px; padding-top: 0; }

.statusbar { height: 19px; background: #f0f0f0; border-top: 1px solid #d8d8d8; display: flex; line-height: 17px; position: relative; }
.st-a { width: 251px; padding-left: 2px; border-right: 1px solid #d4d4d4; flex: none; white-space: nowrap; }
.st-b { width: 123px; text-align: right; border-right: 1px solid #d4d4d4; flex: none; padding-right: 1px; }
.st-c { width: 126px; border-right: 1px solid #d4d4d4; flex: none; }
.grip { position: absolute; right: 2px; bottom: 1px; }

.taskbar { height: 40px; background: #1c1c1c; display: flex; align-items: center; color: #fff; position: relative; }
.tb-btn { width: 48px; height: 40px; display: flex; align-items: center; justify-content: center; flex: none; position: relative; }
.tb-btn.app { width: 49px; }
.tb-btn:nth-child(4) { margin-left: 3px; }
.tb-btn.ul::after { content: ""; position: absolute; left: 4px; right: 5px; bottom: 0; height: 2px; background: #76b9ed; }
.md-big { width: 24px; height: 24px; background: #ff6a00; color: #fff; font: bold 12px/24px "Liberation Sans", sans-serif; text-align: center; display: block; }
.teams-t { fill: #fff; font: bold 10px "Liberation Sans", sans-serif; text-anchor: middle; }

.tray { margin-left: auto; display: flex; align-items: center; height: 40px; }
.tray svg { display: block; flex: none; }
.tray-net { margin-left: 9px; }
.tray-vol { margin-left: 7px; }
.clock { width: 66px; margin-left: 0; display: flex; flex-direction: column; align-items: center; font-size: 11.5px; line-height: 18px; color: #f0f0f0; }
.tray-note { margin-left: 12px; }
.show-desk { width: 21px; height: 40px; border-right: 1px solid #555; margin-right: 3px; }
```
